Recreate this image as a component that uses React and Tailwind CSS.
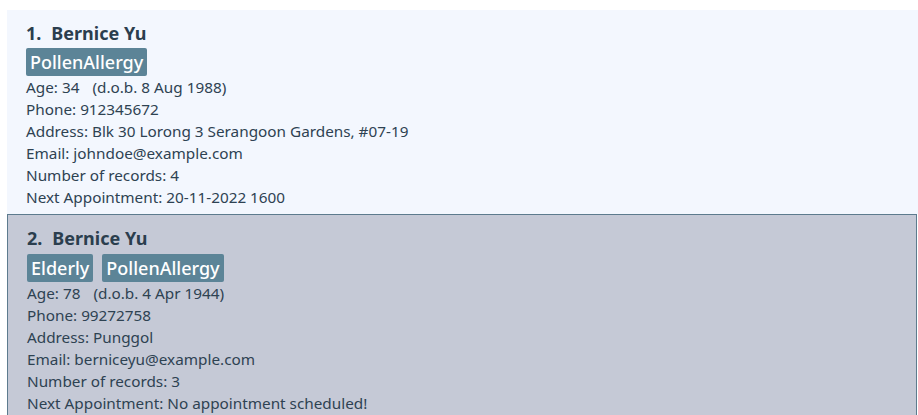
const persons = [
  {
    index: 1,
    name: 'Bernice Yu',
    tags: ['PollenAllergy'],
    age: 34,
    dob: '8 Aug 1988',
    phone: '912345672',
    address: 'Blk 30 Lorong 3 Serangoon Gardens, #07-19',
    email: 'johndoe@example.com',
    records: 4,
    appointment: '20-11-2022 1600',
  },
  {
    index: 2,
    name: 'Bernice Yu',
    tags: ['Elderly', 'PollenAllergy'],
    age: 78,
    dob: '4 Apr 1944',
    phone: '99272758',
    address: 'Punggol',
    email: 'berniceyu@example.com',
    records: 3,
    appointment: 'No appointment scheduled!',
  },
];

function PersonCard({ person, selected }) {
  return (
    <div
      className={
        selected
          ? 'border-l border-t border-r border-[#5d7b8e] bg-[#c5c9d6] pl-[19px] pt-[11px] pb-[6px] mr-[1px]'
          : 'bg-[#f3f7fe] pl-[19px] pt-[11px] pb-[6px]'
      }
    >
      <div className="h-6 flex items-center text-[18px] font-bold text-[#2b3e4e]">
        <span>{person.index}.</span>
        <span className="ml-[10px]">{person.name}</span>
      </div>
      <div className={selected ? 'mt-[4px] flex gap-[9px]' : 'mt-[3px] flex gap-[9px]'}>
        {person.tags.map((tag) => (
          <span
            key={tag}
            className="h-[28px] flex items-center px-[4px] rounded-[2px] bg-[#5c8497] text-white text-[18px] font-medium"
          >
            {tag}
          </span>
        ))}
      </div>
      <div className="text-[15.3px] leading-[22px] text-[#2e4252]">
        <p>
          Age: {person.age}
          <span className="ml-[13px]">(d.o.b. {person.dob})</span>
        </p>
        <p>Phone: {person.phone}</p>
        <p>Address: {person.address}</p>
        <p>Email: {person.email}</p>
        <p>Number of records: {person.records}</p>
        <p>Next Appointment: {person.appointment}</p>
      </div>
    </div>
  );
}

export default function App() {
  return (
    <div className="w-[918px] h-[415px] overflow-hidden bg-white pt-[10px] pl-[7px] font-['Noto_Sans',sans-serif]">
      {persons.map((p) => (
        <PersonCard key={p.index} person={p} selected={p.index === 2} />
      ))}
    </div>
  );
}
